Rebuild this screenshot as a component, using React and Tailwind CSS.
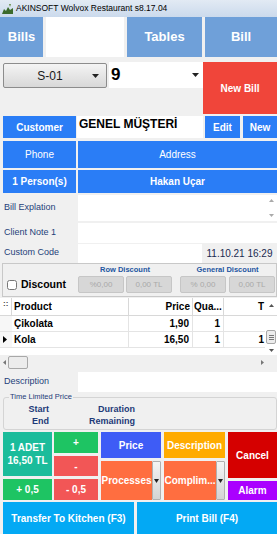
import { useState } from "react";

const font = { fontFamily: "'Liberation Sans', Arial, sans-serif" };

function Btn({ className = "", children }) {
  return (
    <div className={`flex items-center justify-center text-white font-bold text-[10px] ${className}`}>
      {children}
    </div>
  );
}

function Arrow() {
  return (
    <svg width="7" height="4" viewBox="0 0 7 4">
      <path d="M0 0h7L3.5 4z" fill="#222" />
    </svg>
  );
}

function DropPart() {
  return (
    <div className="w-[9px] bg-gradient-to-b from-[#f4f4f4] to-[#d4d4d4] border border-[#b0b0b0] rounded-[1px] flex items-center justify-center">
      <svg width="5" height="4" viewBox="0 0 5 4"><path d="M0 0h5L2.5 4z" fill="#222" /></svg>
    </div>
  );
}

function GreyBox({ children }) {
  return (
    <div className="w-[46px] h-[17px] bg-[#d7d7d7] border border-[#c6c6c6] rounded-[2px] text-[#a9a9a9] text-[8px] flex items-center justify-center">
      {children}
    </div>
  );
}

export default function App() {
  const [discount, setDiscount] = useState(false);
  const rows = [
    { name: "Çikolata", price: "1,90", qty: "1", total: "" },
    { name: "Kola", price: "16,50", qty: "1", total: "1", current: true },
  ];

  return (
    <div className="w-[277px] h-[534px] overflow-hidden bg-[#f0f0f0] text-[#1a1a1a]" style={font}>
      {/* title bar */}
      <div className="h-[17px] flex items-center gap-[3px] px-[2px] bg-gradient-to-b from-[#e2eaf4] to-[#cbdaec] text-[8.5px] text-black">
        <svg width="11" height="11" viewBox="0 0 11 11">
          <path d="M0 11 L2 6 L4 8 L6 4 L8 7 L11 5 L11 11z" fill="#3c6b2c" />
          <path d="M7 1 L8 4 L9 1z" fill="#6a8f4a" />
        </svg>
        <span>AKINSOFT Wolvox Restaurant s8.17.04</span>
      </div>

      {/* tabs */}
      <div className="h-[40px] flex gap-[3px] text-white font-bold text-[13px]">
        <div className="w-[43px] bg-[#6fa0d9] flex items-center justify-center">Bills</div>
        <div className="w-[78px] bg-white" />
        <div className="w-[75px] bg-[#6fa0d9] flex items-center justify-center">Tables</div>
        <div className="flex-1 bg-[#6fa0d9] flex items-center justify-center">Bill</div>
      </div>

      {/* table select + new bill */}
      <div className="flex pt-[5px] h-[59px]">
        <div className="w-[203px] pl-[3px] flex gap-[2px] items-start">
          <div className="w-[104px] h-[25px] mt-[1px] border border-[#8c8c8c] rounded-[2px] bg-gradient-to-b from-[#f4f4f4] to-[#d8d8d8] flex items-center text-[12px]">
            <span className="flex-1 text-center pl-[4px]">S-01</span>
            <span className="pr-[7px] flex"><Arrow /></span>
          </div>
          <div className="flex-1 h-[26px] bg-white flex items-center pl-[2px] pr-[4px]">
            <span className="flex-1 font-bold text-[17px] text-black">9</span>
            <Arrow />
          </div>
        </div>
        <Btn className="flex-1 h-[52px] bg-[#f0453a]">New Bill</Btn>
      </div>

      {/* customer */}
      <div className="flex h-[22px] pl-[3px]">
        <Btn className="w-[73px] bg-[#2a7df6]">Customer</Btn>
        <div className="w-[126px] ml-[1px] bg-white font-bold text-[12px] text-black pl-[2px] leading-[17px]">GENEL MÜŞTERİ</div>
        <Btn className="w-[35px] ml-[2px] bg-[#2a7df6]">Edit</Btn>
        <Btn className="flex-1 ml-[3px] bg-[#2a7df6]">New</Btn>
      </div>
      <div className="flex h-[27px] gap-[2px] pl-[3px] mt-[3px]">
        <Btn className="w-[73px] bg-[#2a7df6] !font-normal">Phone</Btn>
        <Btn className="flex-1 bg-[#2a7df6] !font-normal">Address</Btn>
      </div>
      <div className="flex h-[23px] gap-[2px] pl-[3px] mt-[2px]">
        <Btn className="w-[73px] bg-[#2a7df6]">1 Person(s)</Btn>
        <Btn className="flex-1 bg-[#2a7df6]">Hakan Uçar</Btn>
      </div>

      {/* notes */}
      <div className="flex h-[26px] mt-[2px] text-[9px] text-[#1f3f7a]">
        <div className="w-[78px] pl-[4px] flex items-center">Bill Explation</div>
        <div className="flex-1 bg-white flex justify-end">
          <div className="w-[11px] flex flex-col justify-between items-center py-[4px]">
            <svg width="5" height="3" viewBox="0 0 5 3"><path d="M0 3h5L2.5 0z" fill="#aaa" /></svg>
            <svg width="5" height="3" viewBox="0 0 5 3"><path d="M0 0h5L2.5 3z" fill="#aaa" /></svg>
          </div>
        </div>
      </div>
      <div className="flex h-[20px] mt-[2px] text-[9px] text-[#1f3f7a]">
        <div className="w-[78px] pl-[4px] flex items-center">Client Note 1</div>
        <div className="flex-1 bg-white" />
      </div>
      <div className="flex h-[20px] text-[9px] text-[#1f3f7a]">
        <div className="w-[78px] pl-[4px] flex items-center">Custom Code</div>
        <div className="w-[124px] bg-white border-t border-[#f0f0f0]" />
        <div className="flex-1 flex items-center justify-center text-[10px] text-[#1a2a50]">11.10.21 16:29</div>
      </div>

      {/* discount */}
      <div className="ml-[2px] h-[34px] border border-[#c8c8c8] flex items-end pb-[3px]">
        <label className="w-[75px] h-[17px] flex items-center gap-[4px] pl-[4px] font-bold text-[10.5px] text-black">
          <input
            type="checkbox"
            checked={discount}
            onChange={(e) => setDiscount(e.target.checked)}
            className="w-[10px] h-[10px] m-0"
          />
          Discount
        </label>
        <div className="flex flex-col items-center">
          <div className="text-[#2255a0] font-bold text-[7.5px] leading-[12px]">Row Discount</div>
          <div className="flex gap-[2px]">
            <GreyBox>%0,00</GreyBox>
            <GreyBox>0,00 TL</GreyBox>
          </div>
        </div>
        <div className="flex flex-col items-center ml-[8px]">
          <div className="text-[#2255a0] font-bold text-[7.5px] leading-[12px]">General Discount</div>
          <div className="flex gap-[3px]">
            <GreyBox>% 0,00</GreyBox>
            <GreyBox>0,00 TL</GreyBox>
          </div>
        </div>
      </div>

      {/* grid */}
      <div className="mt-[1px] h-[72px] bg-white flex flex-col text-[10px] font-bold text-black">
        <div className="flex h-[18px] border-b border-[#d8d8d8]">
          <div className="flex-1 flex">
            <div className="w-[12px] border-r border-[#d8d8d8] text-[8px] leading-[12px] pl-[3px] text-[#444]">::</div>
            <div className="w-[117px] border-r border-[#d8d8d8] pl-[2px] flex items-center">Product</div>
            <div className="w-[64px] border-r border-[#d8d8d8] pr-[2px] flex items-center justify-end">Price</div>
            <div className="w-[31px] border-r border-[#d8d8d8] pl-[1px] flex items-center overflow-hidden whitespace-nowrap">Qua...</div>
            <div className="flex-1 flex items-center justify-end pr-[1px] overflow-hidden">T</div>
          </div>
          <div className="w-[12px] flex justify-center pt-[6px]">
            <svg width="5" height="3" viewBox="0 0 5 3"><path d="M0 3h5L2.5 0z" fill="#555" /></svg>
          </div>
        </div>
        <div className="flex h-[39px]">
          <div className="flex-1 flex flex-col">
            {rows.map((r) => (
              <div key={r.name} className="flex h-[16px] border-b border-[#e4e4e4]">
                <div className="w-[12px] flex items-center pl-[3px] bg-[#f7f7f7]">
                  {r.current && (
                    <svg width="4" height="7" viewBox="0 0 4 7"><path d="M0 0v7l4-3.5z" fill="#000" /></svg>
                  )}
                </div>
                <div className="w-[117px] border-r border-[#e4e4e4] pl-[2px] flex items-center">{r.name}</div>
                <div className="w-[64px] border-r border-[#e4e4e4] pr-[3px] flex items-center justify-end">{r.price}</div>
                <div className="w-[31px] border-r border-[#e4e4e4] pr-[3px] flex items-center justify-end">{r.qty}</div>
                <div className="flex-1 flex items-center justify-end pr-[1px]">{r.total}</div>
              </div>
            ))}
          </div>
          <div className="w-[12px] flex flex-col items-center">
            <div className="mt-[14px] w-[10px] h-[14px] bg-[#ececec] border border-[#a8a8a8] rounded-[2px] flex flex-col justify-center items-center gap-[1px]">
              <div className="w-[5px] h-px bg-[#777]" />
              <div className="w-[5px] h-px bg-[#777]" />
              <div className="w-[5px] h-px bg-[#777]" />
            </div>
            <div className="mt-auto mb-[3px]">
              <svg width="5" height="3" viewBox="0 0 5 3"><path d="M0 0h5L2.5 3z" fill="#555" /></svg>
            </div>
          </div>
        </div>
        <div className="h-[15px] bg-[#f0f0f0] flex items-center">
          <div className="w-[8px] flex justify-center">
            <svg width="3" height="5" viewBox="0 0 3 5"><path d="M3 0v5L0 2.5z" fill="#777" /></svg>
          </div>
          <div className="w-[20px] h-[13px] bg-[#ececec] border border-[#a8a8a8] rounded-[2px]" />
          <div className="flex-1" />
          <div className="w-[16px] flex justify-start">
            <svg width="3" height="5" viewBox="0 0 3 5"><path d="M0 0v5l3-2.5z" fill="#777" /></svg>
          </div>
        </div>
      </div>

      {/* description */}
      <div className="flex h-[20px] mt-[2px] text-[9px] text-[#1f3f7a]">
        <div className="w-[78px] pl-[4px] flex items-center">Description</div>
        <div className="flex-1 bg-white" />
      </div>

      {/* time limited price */}
      <div className="relative ml-[3px] mt-[5px] h-[33px] border border-[#d4d4d4] rounded-[3px] text-[9px] font-bold text-[#1e3a78]">
        <span className="absolute -top-[6px] left-[5px] bg-[#f0f0f0] px-[1px] font-normal text-[7.5px] leading-[10px] text-[#1e3a78]">Time Limited Price</span>
        <div className="grid grid-cols-[45px_86px] gap-y-[1px] pt-[6px] text-right leading-[11px]">
          <span>Start</span>
          <span>Duration</span>
          <span>End</span>
          <span>Remaining</span>
        </div>
      </div>

      {/* action buttons */}
      <div className="flex gap-[2px] pl-[3px] mt-[2px] h-[68px]">
        <div className="w-[49px] flex flex-col gap-[3px]">
          <Btn className="h-[44px] bg-[#1bbc9b] leading-[13px] text-center">1 ADET<br />16,50 TL</Btn>
          <Btn className="flex-1 bg-[#1ec463]">+ 0,5</Btn>
        </div>
        <div className="w-[44px] flex flex-col gap-[3px]">
          <Btn className="h-[21px] bg-[#1ec463]">+</Btn>
          <Btn className="h-[20px] bg-[#f25656]">-</Btn>
          <Btn className="flex-1 bg-[#f25656]">- 0,5</Btn>
        </div>
        <div className="w-[60px] ml-[1px] flex flex-col gap-[3px]">
          <Btn className="h-[26px] bg-[#3e5cf6]">Price</Btn>
          <div className="flex-1 flex">
            <Btn className="flex-1 bg-[#ff6e40]">Processes</Btn>
            <DropPart />
          </div>
        </div>
        <div className="w-[61px] ml-[1px] flex flex-col gap-[3px]">
          <Btn className="h-[26px] bg-[#ffab00]">Description</Btn>
          <div className="flex-1 flex">
            <Btn className="flex-1 bg-[#ff6e40]">Complim...</Btn>
            <DropPart />
          </div>
        </div>
        <div className="flex-1 ml-[1px] flex flex-col gap-[3px]">
          <Btn className="h-[46px] bg-[#d50000]">Cancel</Btn>
          <Btn className="flex-1 bg-[#aa00ff]">Alarm</Btn>
        </div>
      </div>

      {/* bottom */}
      <div className="flex gap-[3px] pl-[3px] mt-[2px] h-[32px]">
        <Btn className="w-[131px] bg-[#03a9f4]">Transfer To Kitchen (F3)</Btn>
        <Btn className="flex-1 bg-[#03a9f4]">Print Bill (F4)</Btn>
      </div>
    </div>
  );
}
